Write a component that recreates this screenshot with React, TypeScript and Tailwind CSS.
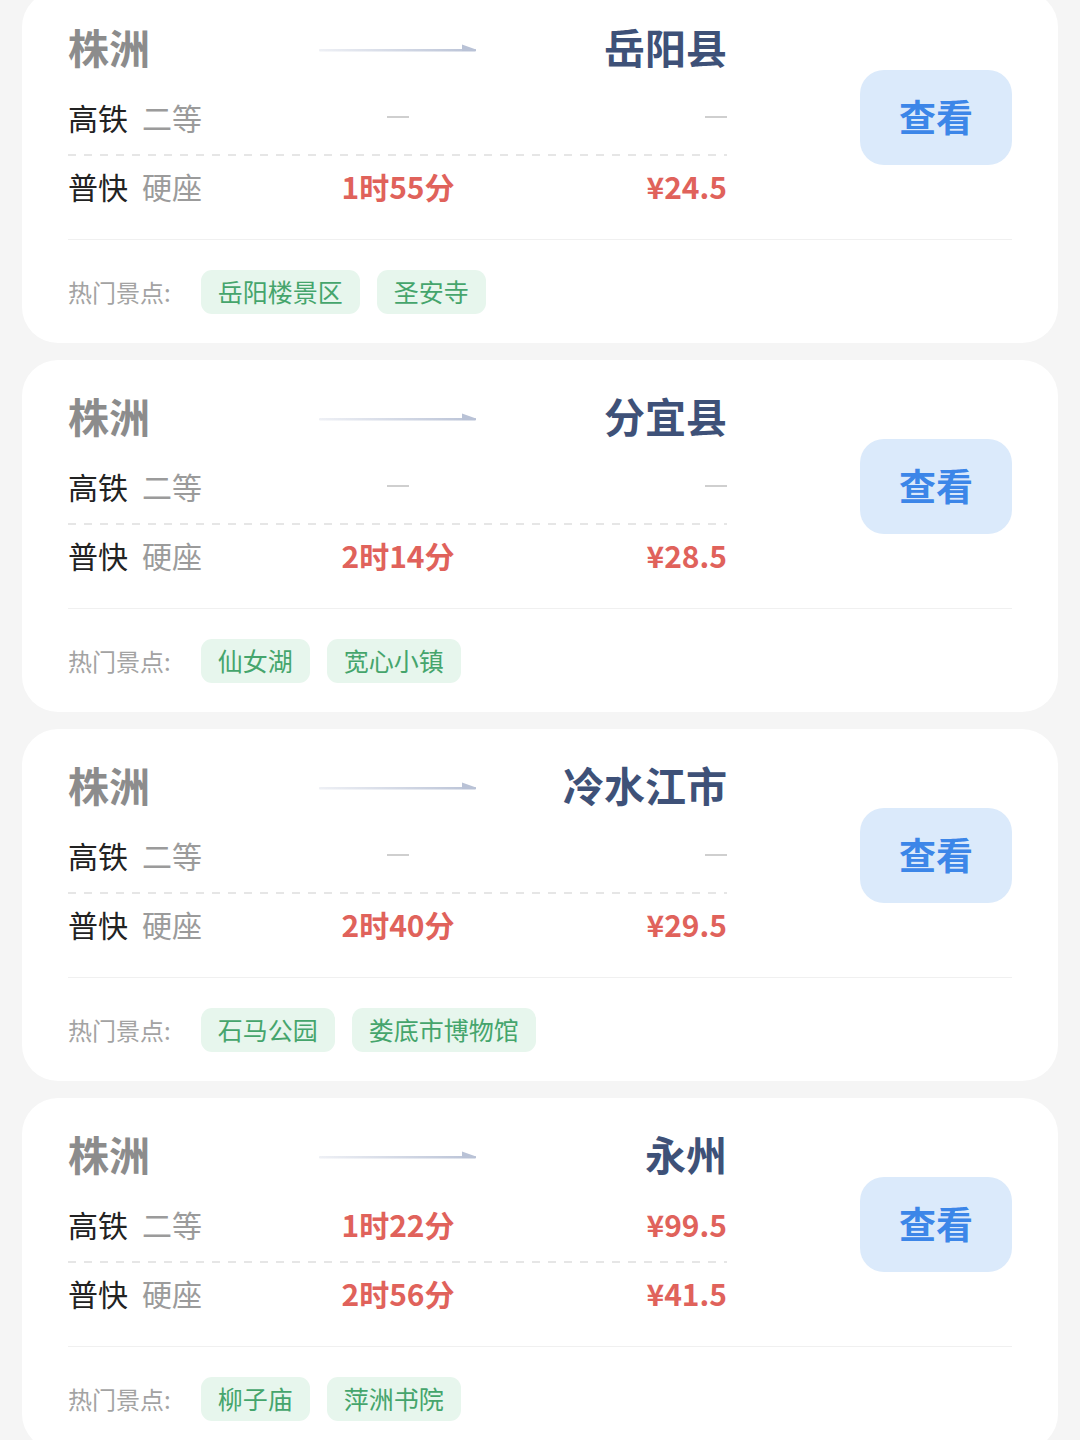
const FONT = "font-['Noto_Sans_CJK_SC','Noto_Sans',sans-serif]";

type Fare = { time: string; price: string } | null;

type Route = {
  to: string;
  gaotie: Fare;
  pukuai: Fare;
  spots: string[];
};

const routes: Route[] = [
  { to: '岳阳县', gaotie: null, pukuai: { time: '1时55分', price: '¥24.5' }, spots: ['岳阳楼景区', '圣安寺'] },
  { to: '分宜县', gaotie: null, pukuai: { time: '2时14分', price: '¥28.5' }, spots: ['仙女湖', '宽心小镇'] },
  { to: '冷水江市', gaotie: null, pukuai: { time: '2时40分', price: '¥29.5' }, spots: ['石马公园', '娄底市博物馆'] },
  { to: '永州', gaotie: { time: '1时22分', price: '¥99.5' }, pukuai: { time: '2时56分', price: '¥41.5' }, spots: ['柳子庙', '萍洲书院'] },
];

const Arrow = () => (
  <svg width="158" height="12" viewBox="0 0 158 12">
    <defs>
      <linearGradient id="arrowGrad" x1="0" x2="1" y1="0" y2="0">
        <stop offset="0" stopColor="#eef0f5" />
        <stop offset="1" stopColor="#b9c2d6" />
      </linearGradient>
    </defs>
    <rect x="0" y="8" width="157" height="2.5" rx="1" fill="url(#arrowGrad)" />
    <path d="M143 3.5 L157 8.5 L157 10 L143 10 Z" fill="#b9c2d6" />
  </svg>
);

const Dash = () => <span className="block h-[2px] w-[22px] bg-[#cfcfcf]" />;

const FareRow = ({ train, seat, fare }: { train: string; seat: string; fare: Fare }) => (
  <div className="grid h-[44px] grid-cols-[220px_220px_1fr] items-center">
    <div className="flex items-center text-[30px] leading-none">
      <span className="text-[#222222]">{train}</span>
      <span className="ml-[14px] text-[#9b9b9b]">{seat}</span>
    </div>
    <div className="flex justify-center">
      {fare ? <span className="text-[30px] font-bold leading-none text-[#e0625b]">{fare.time}</span> : <Dash />}
    </div>
    <div className="flex justify-end">
      {fare ? <span className="text-[30px] font-bold leading-none text-[#e0625b]">{fare.price}</span> : <Dash />}
    </div>
  </div>
);

const RouteCard = ({ route }: { route: Route }) => (
  <div className="mx-[22px] rounded-[36px] bg-white px-[46px] pt-[35px] pb-[29px]">
    <div className="flex items-center pb-[31px]">
      <div className="w-[659px]">
        <div className="grid h-[40px] grid-cols-[220px_220px_1fr] items-center">
          <span className="text-[41px] font-bold leading-none text-[#8c8c8c]">株洲</span>
          <div className="flex justify-center">
            <Arrow />
          </div>
          <span className="text-right text-[41px] font-bold leading-none text-[#3e5178]">{route.to}</span>
        </div>
        <div className="mt-[29px]">
          <FareRow train="高铁" seat="二等" fare={route.gaotie} />
        </div>
        <div className="mt-[15px] mb-[8px] h-[2px] bg-[repeating-linear-gradient(90deg,#e6e6e6_0_8px,transparent_8px_16px)]" />
        <FareRow train="普快" seat="硬座" fare={route.pukuai} />
      </div>
      <button className="ml-auto flex h-[95px] w-[152px] items-center justify-center rounded-[24px] bg-[#dbeafb] text-[37px] font-bold text-[#3c86e8]">
        查看
      </button>
    </div>
    <div className="h-px bg-[#f0f0f0]" />
    <div className="mt-[30px] flex h-[44px] items-center">
      <span className="mr-[30px] text-[24px] text-[#a3a3a3]">热门景点:</span>
      <div className="flex gap-[17px]">
        {route.spots.map((s) => (
          <span
            key={s}
            className="flex h-[44px] items-center rounded-[11px] bg-[#e7f6ed] px-[17px] text-[25px] text-[#45a56c]"
          >
            {s}
          </span>
        ))}
      </div>
    </div>
  </div>
);

export default function App() {
  return (
    <div className={`${FONT} min-h-[1440px] overflow-hidden bg-[#f5f5f5]`}>
      <div className="-mt-[9px] flex flex-col gap-[17px]">
        {routes.map((r) => (
          <RouteCard key={r.to} route={r} />
        ))}
      </div>
    </div>
  );
}
